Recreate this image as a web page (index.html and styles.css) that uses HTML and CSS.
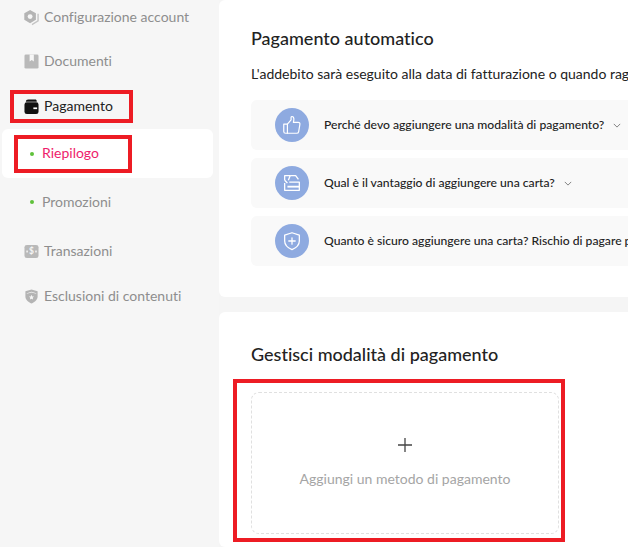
FILE: index.html
```html
<!DOCTYPE html>
<html lang="it">
<head>
  <meta charset="UTF-8" />
  <title>Pagamento</title>
  <link rel="stylesheet" href="styles.css">
</head>
<body>

  <div class="page">
    <nav class="sidebar">
      <div class="nav-item">
        <svg class="nav-icon" viewBox="0 0 16 16"><path fill="#b4b4b4" d="M6.500 0l6.200 3.500v7L6.500 14 .3 10.500v-7z"/><circle cx="6.500" cy="7" r="2.600" fill="#f6f6f6"/><path fill="none" stroke="#c4c4c4" stroke-width="1.500" d="M15 4v7.700L8.500 15.500"/></svg>
        <span>Configurazione account</span>
      </div>
      <div class="nav-item">
        <svg class="nav-icon" viewBox="0 0 16 16"><rect x="0.500" y="0.500" width="15" height="15" rx="1.500" fill="#b9b9b9"/><path fill="#f6f6f6" d="M6 0.500h4.500v7.500L8.250 6.300 6 8z"/></svg>
        <span>Documenti</span>
      </div>
      <div class="nav-item nav-item-active">
        <svg class="nav-icon" viewBox="0 0 16 16"><path fill="#111" d="M2 3C2 1.300 3 .5 4.500.5H12c1 0 1.500.6 1.500 1.500v1H2z"/><rect x="0.500" y="3.500" width="15" height="12.500" rx="2.500" fill="#111"/><path d="M2.500 3.200h11" stroke="#666" stroke-width="0.600"/><rect x="10" y="9" width="4" height="1.800" fill="#fff"/></svg>
        <span>Pagamento</span>
      </div>
      <div class="sub-card">
        <div class="sub-item sub-item-active"><i class="dot"></i><span>Riepilogo</span></div>
      </div>
      <div class="sub-item sub-promo"><i class="dot"></i><span>Promozioni</span></div>
      <div class="nav-item nav-trans">
        <svg class="nav-icon" viewBox="0 0 16 16"><rect x="0.500" y="1" width="15" height="14" rx="2.500" fill="#b9b9b9"/><text x="8" y="11" text-anchor="middle" class="icon-dollar">$</text><rect x="2.500" y="7" width="1.600" height="2" fill="#f6f6f6"/><rect x="12" y="7" width="1.600" height="2" fill="#f6f6f6"/></svg>
        <span>Transazioni</span>
      </div>
      <div class="nav-item">
        <svg class="nav-icon" viewBox="0 0 16 16"><path fill="#b4b4b4" d="M8 .5l6.500 2v5.500c0 3.500-3 6-6.500 7.500C4.500 14 1.500 11.500 1.500 8V2.500z"/><path fill="#f6f6f6" d="M3 4.500L8 3l5 1.500V5L8 3.700 3 5z"/><path fill="#f6f6f6" d="M8 6.200l.8 1.700 1.900.2-1.400 1.300.4 1.800L8 10.300l-1.700.9.400-1.800-1.400-1.300 1.900-.2z"/></svg>
        <span>Esclusioni di contenuti</span>
      </div>
    </nav>

    <main class="main">
      <section class="card card-auto">
        <h2 class="card-title">Pagamento automatico</h2>
        <p class="card-desc">L'addebito sarà eseguito alla data di fatturazione o quando raggiungi la soglia di pagamento.</p>

        <div class="faq-list">
          <div class="faq-row">
            <span class="faq-icon">
              <svg viewBox="0 0 24 24" fill="none" stroke="#fff" stroke-width="1.300" stroke-linejoin="round" stroke-linecap="round"><path d="M3 11h4v10H5a2 2 0 0 1-2-2z"/><path d="M7 11l4-4.500V3.500c0-.8 1.200-1 2-.4 1.200.9 1.300 3.200.5 6h5.300c1.300 0 2 1 1.800 2.200l-1.300 7.800c-.2 1-1 1.900-2.200 1.900H7"/></svg>
            </span>
            <span class="faq-text">Perché devo aggiungere una modalità di pagamento?</span>
            <svg class="chevron" viewBox="0 0 10 6"><path d="M1 1l4 4 4-4" fill="none" stroke="#666" stroke-width="1"/></svg>
          </div>
          <div class="faq-row">
            <span class="faq-icon">
              <svg viewBox="0 0 24 24" fill="none" stroke="#fff" stroke-width="1.400" stroke-linejoin="round"><path d="M4 9V4h6l-2 5"/><path d="M10 4h6l3 4"/><path d="M4 12v8h16v-9H9"/><path d="M4 9l3 3"/><path d="M7 16h13" stroke-width="2"/></svg>
            </span>
            <span class="faq-text">Qual è il vantaggio di aggiungere una carta?</span>
            <svg class="chevron" viewBox="0 0 10 6"><path d="M1 1l4 4 4-4" fill="none" stroke="#666" stroke-width="1"/></svg>
          </div>
          <div class="faq-row">
            <span class="faq-icon">
              <svg viewBox="0 0 24 24" fill="none" stroke="#fff" stroke-width="1.400" stroke-linejoin="round" stroke-linecap="round"><path d="M12 3l8 2.500V12c0 4.500-3.500 7.500-8 9.500C7.500 19.500 4 16.500 4 12V5.500z"/><path d="M12 8.500v7M8.500 12h7"/></svg>
            </span>
            <span class="faq-text">Quanto è sicuro aggiungere una carta? Rischio di pagare più del dovuto?</span>
          </div>
        </div>
      </section>

      <section class="card card-manage">
        <h2 class="card-title">Gestisci modalità di pagamento</h2>
        <div class="add-box">
          <svg class="add-plus" viewBox="0 0 16 16"><path d="M8 1v14M1 8h14" stroke="#444" stroke-width="1.300" fill="none"/></svg>
          <span class="add-text">Aggiungi un metodo di pagamento</span>
        </div>
      </section>
    </main>
  </div>

  <!-- red annotation boxes drawn over the screenshot -->
  <div class="mark mark-pay"></div>
  <div class="mark mark-recap"></div>
  <div class="mark mark-add"></div>

</body>
</html>
```

FILE: styles.css
```css
html, body {
  margin: 0; padding: 0;
  height: 100%;
  overflow: hidden;
  font-family: "Lato", "Liberation Sans", sans-serif;
  font-variant-ligatures: none;
  background: #f5f5f5;
}
.page {
  display: flex;
  height: 547px;
  position: relative;
}
.sidebar {
  width: 219px;
  flex: none;
  background: #f6f6f6;
  display: flex;
  flex-direction: column;
}
.nav-item {
  display: flex;
  align-items: center;
  gap: 5px;
  height: 34px;
  margin-bottom: 10px;
  padding-left: 24px;
  font-size: 14px;
  color: #8e8e8e;
}
.nav-item span, .sub-item span {
  padding-bottom: 2px;
}
.nav-item:nth-child(2) {
  margin-bottom: 11px;
}
.nav-icon {
  width: 15px;
  height: 15px;
  flex: none;
  overflow: visible;
}
.icon-dollar {
  font-size: 9px;
  font-weight: bold;
  fill: #f6f6f6;
}
.nav-item-active {
  color: #222;
  margin-bottom: 6px;
}
.nav-trans {
  margin-bottom: 11px;
}
.sub-card {
  margin: 0 6px 7px 2px;
  height: 49px;
  background: #fff;
  border-radius: 6px;
  display: flex;
  align-items: center;
}
.sub-item {
  display: flex;
  align-items: center;
  gap: 8px;
  height: 34px;
  padding-left: 30px;
  font-size: 14px;
  color: #8e8e8e;
}
.sub-card .sub-item {
  padding-left: 28px;
}
.sub-promo {
  margin-bottom: 15px;
}
.sub-item-active {
  color: #ee1d6b;
}
.dot {
  width: 4px;
  height: 4px;
  border-radius: 50%;
  background: #5fc13a;
}
.main {
  flex: 1;
  min-width: 0;
  display: flex;
  flex-direction: column;
  gap: 15px;
}
.card {
  background: #fff;
  border-radius: 6px 0 0 6px;
  padding-left: 32px;
  white-space: nowrap;
  overflow: hidden;
}
.card-auto {
  height: 297px;
  padding-top: 28px;
  box-sizing: border-box;
}
.card-manage {
  flex: 1;
  padding-top: 32px;
}
.card-title {
  margin: 0;
  font-size: 18px;
  line-height: 21px;
  font-weight: 500;
  color: #222;
}
.card-desc {
  margin: 16px 0 0;
  font-size: 14px;
  line-height: 18px;
  color: #222;
}
.faq-list {
  margin-top: 17px;
  display: flex;
  flex-direction: column;
  gap: 8px;
}
.faq-row {
  height: 50px;
  width: 500px;
  background: #f9f9f9;
  border-radius: 6px;
  display: flex;
  align-items: center;
  padding-left: 24px;
  box-sizing: border-box;
}
.faq-icon {
  width: 34px;
  height: 34px;
  border-radius: 50%;
  background: #8eaae0;
  flex: none;
  display: flex;
  align-items: center;
  justify-content: center;
  margin-right: 15px;
}
.faq-icon svg {
  width: 22px;
  height: 22px;
}
.faq-text {
  font-size: 12.150px;
  font-weight: 500;
  color: #222;
  padding-bottom: 1px;
}
.chevron {
  width: 8px;
  height: 5px;
  margin-left: 9px;
}
.add-box {
  margin-top: 27px;
  width: 308px;
  height: 142px;
  box-sizing: border-box;
  border: 1px dashed #e0e0e0;
  border-radius: 8px;
  display: flex;
  flex-direction: column;
  align-items: center;
}
.add-plus {
  width: 16px;
  height: 16px;
  margin-top: 44px;
}
.add-text {
  margin-top: 17px;
  font-size: 14px;
  color: #a5a5a5;
}
.mark {
  position: absolute;
  border: 4px solid #ed1c24;
  box-sizing: border-box;
}
.mark-pay { left: 10px; top: 90px; width: 123px; height: 33px; }
.mark-recap { left: 14px; top: 135px; width: 118px; height: 38px; }
.mark-add { left: 233px; top: 379px; width: 332px; height: 163px; }
```
